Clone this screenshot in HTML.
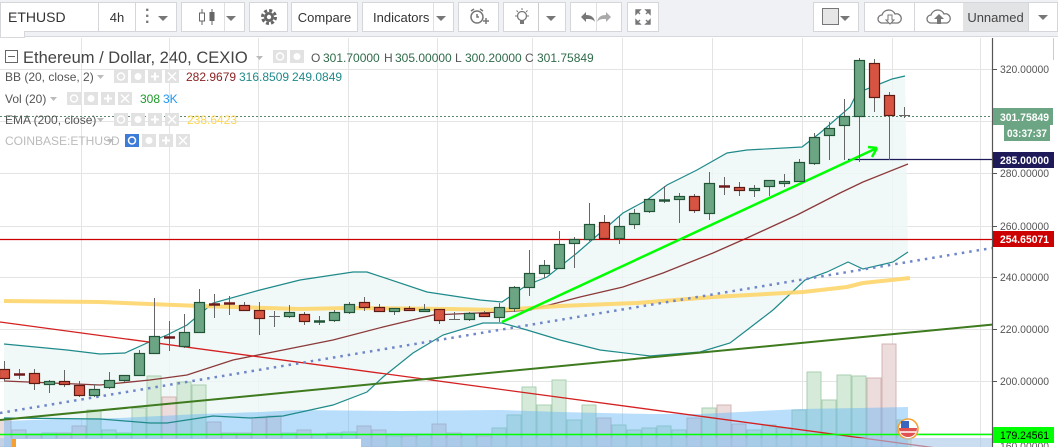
<!DOCTYPE html>
<html><head><meta charset="utf-8">
<style>
*{margin:0;padding:0;box-sizing:border-box}
body{width:1058px;height:447px;overflow:hidden;background:#fff;font-family:"Liberation Sans",sans-serif;position:relative}
#tb{position:absolute;left:0;top:0;width:1058px;height:37px;background:#eff1f4;border-bottom:1px solid #d6d8db}
.b{position:absolute;top:2px;height:30px;background:#fff;border:1px solid #d4d6d9;font-size:13px;color:#333;display:flex;align-items:center;justify-content:center}
.dd{width:0;height:0;border-left:5px solid transparent;border-right:5px solid transparent;border-top:5px solid #777}
.sep{position:absolute;top:0;bottom:0;width:1px;background:#e0e0e0}
svg text{font-family:"Liberation Sans",sans-serif}
</style></head><body>
<svg id="c" width="1058" height="447" style="position:absolute;left:0;top:0"></svg>
<div id="tb">
 <div class="b" style="left:0;width:99px;justify-content:flex-start;padding-left:7px;font-size:14px">ETHUSD</div>
 <div class="b" style="left:98px;width:38px">4h</div>
 <div class="b" style="left:135px;width:42px"><span style="position:absolute;left:9px;top:5px;font-size:16px;color:#777;font-weight:bold;line-height:6px">·<br>·<br>·</span><div class="dd" style="position:absolute;right:8px;top:13px"></div></div>
 <div class="b" style="left:181px;width:64px"><svg width="20" height="20" style="position:absolute;left:15px;top:4px"><path d="M5 2v16M15 2v16" stroke="#666"/><rect x="2.5" y="6" width="5" height="8" fill="#fff" stroke="#666"/><rect x="12.5" y="5" width="5" height="9" fill="#666"/></svg><div class="sep" style="left:42px"></div><div class="dd" style="position:absolute;right:8px;top:13px"></div></div>
 <div class="b" style="left:249px;width:39px"><svg width="20" height="20"><circle cx="10" cy="10" r="6.5" fill="none" stroke="#666" stroke-width="3" stroke-dasharray="3 2.1"/><circle cx="10" cy="10" r="5" fill="#666"/><circle cx="10" cy="10" r="2.2" fill="#fff"/></svg></div>
 <div class="b" style="left:291px;width:67px">Compare</div>
 <div class="b" style="left:362px;width:92px;justify-content:flex-start;padding-left:10px">Indicators<div class="sep" style="left:70px"></div><div class="dd" style="position:absolute;right:7px;top:13px"></div></div>
 <div class="b" style="left:458px;width:41px"><svg width="22" height="22"><circle cx="9" cy="11" r="6" fill="none" stroke="#777" stroke-width="1.5"/><path d="M3 5l3-2M15 5l-3-2M9 8v3h2M15 15h6M18 12v6" stroke="#777" stroke-width="1.5" fill="none"/></svg></div>
 <div class="b" style="left:503px;width:63px"><svg width="20" height="20" style="position:absolute;left:8px;top:4px"><circle cx="10" cy="9" r="4.5" fill="none" stroke="#777" stroke-width="1.3"/><rect x="8" y="13" width="4" height="4" fill="#777"/><path d="M10 1v2M3 9h2M15 9h2M4.5 3.5l1.5 1.5M15.5 3.5l-1.5 1.5" stroke="#777"/></svg><div class="sep" style="left:34px;background:#ccc"></div><div class="dd" style="position:absolute;right:9px;top:13px"></div></div>
 <div class="b" style="left:570px;width:52px"><svg width="50" height="20"><path d="M10 10l5-5v3c5 0 8 2 9 7-2-3-5-3-9-3v3z" fill="#777"/><path d="M40 10l-5-5v3c-5 0-8 2-9 7 2-3 5-3 9-3v3z" fill="#aaa"/></svg><div class="sep" style="left:25px"></div></div>
 <div class="b" style="left:627px;width:32px"><svg width="18" height="18"><path d="M2 2h4L2 6zM16 2h-4l4 4zM2 16h4l-4-4zM16 16h-4l4-4zM3 3l3 3M15 3l-3 3M3 15l3-3M15 15l-3-3" fill="#777" stroke="#777" stroke-width="1.4"/></svg></div>
 <div class="b" style="left:813px;width:46px"><div style="position:absolute;left:8px;top:5px;width:17px;height:17px;background:#e6e6e6;border:1px solid #777"></div><div class="dd" style="position:absolute;right:8px;top:13px"></div></div>
 <div class="b" style="left:864px;width:51px"><svg width="30" height="20"><path d="M7 16a4 4 0 010-8 7 7 0 0113-1 4.5 4.5 0 013 9z" fill="#fff" stroke="#777" stroke-width="1.3"/><path d="M13 8v5h-2l4 4 4-4h-2V8z" fill="#fff" stroke="#777"/></svg></div>
 <div class="b" style="left:914px;width:50px"><svg width="30" height="20"><path d="M7 16a4 4 0 010-8 7 7 0 0113-1 4.5 4.5 0 013 9z" fill="#fff" stroke="#777" stroke-width="1.3"/><path d="M13 17v-5h-3l5-5 5 5h-3v5z" fill="#777"/></svg></div>
 <div class="b" style="left:963px;width:66px;background:#e2e3e5;border-left:none;color:#444">Unnamed</div>
 <div class="b" style="left:1028px;width:30px"><div class="dd"></div></div>
</div>
<div style="position:absolute;left:0;top:31px;width:25px;height:7px;background:#fff;border:1px solid #d6d8db;border-top:none"></div>
<script>
var s='';
function L(x1,y1,x2,y2,c,w,extra){s+='<line x1="'+x1+'" y1="'+y1+'" x2="'+x2+'" y2="'+y2+'" stroke="'+c+'" stroke-width="'+(w||1)+'" '+(extra||'')+'/>';}
function P(pts,c,w,extra){s+='<polyline fill="none" points="'+pts.map(function(p){return p.join(',')}).join(' ')+'" stroke="'+c+'" stroke-width="'+w+'" '+(extra||'')+'/>';}
function T(x,y,t,c,sz,extra){s+='<text x="'+x+'" y="'+y+'" fill="'+c+'" font-size="'+sz+'" '+(extra||'')+'>'+t+'</text>';}
[17,69,121,173,226,277,329,381,433].forEach(function(y){L(0,y+.5,992,y+.5,'#e4e4e4')});
[81,169,258,348,437,532,622,712,802,892,980].forEach(function(x){L(x+.5,38,x+.5,447,'#e4e4e4')});
var up=[[4,344],[67,350],[100,354],[125,353],[147,343],[167,335],[187,325],[213,303],[260,290],[300,280],[353,272],[367,272],[427,292],[480,300],[502,302],[527,285],[547,277],[577,253],[623,213],[647,200],[667,185],[697,170],[727,153],[747,150],[802,147],[820,133],[850,107],[857,93],[892,79],[905,76]];
var lo=[[4,418],[100,419],[150,423],[167,423],[213,416],[250,418],[283,416],[333,405],[367,392],[383,377],[413,353],[443,335],[483,323],[502,323],[527,330],[560,340],[600,350],[650,356],[700,352],[730,343],[747,330],[773,310],[805,280],[827,272],[848,262],[863,269],[893,262],[908,252]];
var mid=[[4,381],[100,385],[150,380],[187,375],[233,360],[283,350],[333,340],[383,327],[433,315],[500,312],[530,310],[580,297],[623,287],[663,273],[713,253],[747,238],[797,215],[840,193],[863,182],[908,164]];
var poly=up.concat(lo.slice().reverse());
s+='<polygon points="'+poly.map(function(p){return p.join(',')}).join(' ')+'" fill="#eef6f6" opacity=".8"/>';
var vt=[['r',420],['r',430],['r',435],['g',433],['r',433],['r',426],['g',410],['g',430],['g',433],['g',408],['g',376],['r',397],['g',382],['g',385],['r',422],['r',433],['r',433],['r',418],['r',416],['g',433],['r',430],['g',435],['g',433],['g',432],['r',426],['r',430],['g',436],['r',436],['g',435],['r',424],['r',433],['g',435],['r',436],['g',428],['g',415],['g',387],['g',405],['g',380],['g',420],['g',405],['r',418],['g',425],['g',430],['g',428],['g',426],['g',430],['r',418],['g',408],['r',405],['r',424],['g',430],['g',425],['g',428],['g',410],['g',372],['g',400],['g',375],['g',376],['r',378],['r',344],['g',420]];
vt.forEach(function(v,i){var x=4+15*i-7;var g=v[0]=='g';s+='<rect x="'+x+'" y="'+v[1]+'" width="14" height="'+(447-v[1])+'" fill="'+(g?'#d5ead9':'#eddcdc')+'" stroke="'+(g?'#a9cfb1':'#d4b4b4')+'"/>';});
s+='<polygon points="4,421 60,419 120,418 200,414 260,412 300,410 400,411 500,410 560,412 650,414 700,414 760,411 800,409 860,408 908,407 908,447 4,447" fill="#64b5f6" opacity=".45"/>';
P(up,'#1f8a8a',1.2);P(lo,'#1f8a8a',1.2);P(mid,'#8b3a3a',1.3);
L(0,322,992,455.5,'#d42020',1.3);
P([[4,301],[100,302],[200,306],[300,309],[350,308],[450,309],[500,310],[560,306],[637,303],[713,297],[803,292],[847,287],[863,283],[910,278]],'#fdd56a',4,'stroke-linejoin="round" opacity=".9"');
L(0,413,992,248,'#6f86c9',2.5,'stroke-dasharray="2.5 5"');
L(0,420,992,324.6,'#3e7a1e',2);
L(0,239.5,992,239.5,'#cc0000',1.3);
L(848,159.5,992,159.5,'#1e1a5a',1.3);
L(0,116.5,992,116.5,'#5a8a6a',1,'stroke-dasharray="2 2"');
L(0,434.5,992,434.5,'#00ff00',1.5);
L(502,322,877,148,'#00ff00',2.5);L(877,148,868,147,'#00ff00',2.5);L(877,148,872,157,'#00ff00',2.5);
var C=[['r',369,378,361,381],['d',374,374,369,379],['r',373,383,369,390],['g',381,384,380,393],['r',381,384,370,387],['r',385,395,381,397],['g',389,395,384,397],['g',380,387,372,389],['g',375,380,375,382],['g',353,375,350,376],['g',336,353,298,353],['d',337,337,321,351],['g',332,346,314,348],['g',302,332,289,333],['d',304,304,294,318],['d',303,303,296,315],['r',305,310,302,311],['r',310,318,302,335],['x',316,316,311,327],['g',312,316,305,318],['r',314,321,312,325],['e',321,321,316,325],['g',312,320,310,322],['g',304,312,302,314],['r',302,307,297,311],['r',307,311,304,311],['g',308,311,308,315],['r',308,310,306,310],['g',309,311,304,311],['r',309,320,309,324],['x',319,319,312,319],['g',313,319,312,321],['r',313,316,311,316],['g',307,317,303,322],['g',287,308,286,312],['g',273,287,250,296],['g',265,273,260,278],['g',244,268,231,269],['g',239,243,237,268],['g',224,239,203,241],['r',222,238,215,238],['g',226,238,216,244],['g',213,224,209,229],['g',199,211,198,213],['e',200,200,186,203],['g',196,199,193,223],['r',196,210,194,213],['g',183,213,172,220],['d',186,186,177,195],['r',187,190,182,196],['g',188,190,185,197],['g',180,186,180,196],['g',181,183,174,187],['g',162,181,159,181],['g',137,163,133,165],['g',128,135,122,160],['g',116,125,99,160],['g',60,116,58,162],['r',63,97,59,112],['r',95,115,92,160],['x',115,115,107,118]];
C.forEach(function(c,i){var x=4+15*i;L(x+.5,c[3],x+.5,c[4],'#666',1);
 if(c[0]=='g'||c[0]=='r'){var g=c[0]=='g';s+='<rect x="'+(x-4.5)+'" y="'+(c[1]+.5)+'" width="10" height="'+Math.max(2,c[2]-c[1])+'" fill="'+(g?'#6ba583':'#d75442')+'" stroke="'+(g?'#225437':'#5b1a13')+'" stroke-width="1.2"/>';}
 else{var col=c[0]=='d'?'#6f1a1a':(c[0]=='e'?'#225437':'#666');L(x-5,c[1]+.5,x+6,c[1]+.5,col,c[0]=='x'?1:2.5);}});
s+='<circle cx="908" cy="429" r="10" fill="#fff" stroke="#f5a030" stroke-width="1.5"/><path d="M899 428h18a9 9 0 01-18 0z" fill="#e05050"/><path d="M900 432h16" stroke="#fff" stroke-width="1.5"/><rect x="901" y="421" width="8" height="7" fill="#3a66c0"/>';
s+='<rect x="0" y="438" width="992" height="9" fill="#a8c8e8" opacity=".6"/><rect x="12" y="439" width="349" height="8" fill="#fff"/><rect x="12" y="439" width="4" height="8" fill="#f5a030"/>';
s+='<rect x="993" y="38" width="65" height="409" fill="#fff"/>';
L(992.5,38,992.5,447,'#555',1.2);
var TL='textLength="49" lengthAdjust="spacingAndGlyphs"';
[[69,'320.00000'],[173,'280.00000'],[226,'260.00000'],[277,'240.00000'],[329,'220.00000'],[381,'200.00000']].forEach(function(a){L(993,a[0]+.5,997,a[0]+.5,'#555');T(1000,a[0]+4,a[1],'#555',11,TL);});
T(1000,450,'160.00000','#555',11,TL);
s+='<rect x="993" y="108" width="60" height="17" fill="#6ba583"/>';T(1000,121,'301.75849','#fff',11,'font-weight="bold" '+TL);
s+='<rect x="1004" y="125" width="46" height="16" fill="#6ba583"/>';T(1007,137,'03:37:37','#fff',11,'font-weight="bold" textLength="40" lengthAdjust="spacingAndGlyphs"');
s+='<rect x="993" y="152" width="61" height="16" fill="#1e1a5a"/>';T(1000,164,'285.00000','#fff',11,'font-weight="bold" '+TL);
s+='<rect x="993" y="231" width="61" height="16" fill="#cc0000"/>';T(1000,243,'254.65071','#fff',11,'font-weight="bold" '+TL);
s+='<rect x="993" y="427" width="61" height="16" fill="#00ff00"/>';T(1000,439,'179.24561','#000',11,TL);
L(1053.5,38,1053.5,60,'#ccc');
function icons(x,y,n,first){for(var k=0;k<n;k++){s+='<rect x="'+(x+k*17)+'" y="'+y+'" width="14" height="13" fill="'+(k==0&&first?'#3d7bd8':'#e2e2e2')+'"/>';var cx=x+k*17+7,cy=y+6.5;
 if(k==0)s+='<circle cx="'+cx+'" cy="'+cy+'" r="3.5" fill="none" stroke="#fff" stroke-width="1.5"/>';
 else if(k==1)s+='<circle cx="'+cx+'" cy="'+cy+'" r="3.5" fill="#fff"/>';
 else if(k==2)s+='<path d="M'+(cx-4)+' '+cy+'h8M'+cx+' '+(cy-4)+'v8" stroke="#fff" stroke-width="2"/>';
 else s+='<path d="M'+(cx-4)+' '+(cy-4)+'l8 8M'+(cx+4)+' '+(cy-4)+'l-8 8" stroke="#fff" stroke-width="1.5"/>';}}
s+='<rect x="5.5" y="50.5" width="12" height="12" fill="none" stroke="#666"/>';L(8,56.5,15,56.5,'#666');
T(23,63,'Ethereum / Dollar, 240, CEXIO','#444',16.5);
s+='<path d="M256 56h7l-3.5 4z" fill="#bbb"/>';icons(273,50,2);
T(311,62,'O','#555',12);T(323,62,'301.70000','#2f6b4a',12);T(384,62,'H','#555',12);T(395,62,'305.00000','#2f6b4a',12);T(455,62,'L','#555',12);T(465,62,'300.20000','#2f6b4a',12);T(525,62,'C','#555',12);T(537,62,'301.75849','#2f6b4a',12);
T(5,81,'BB (20, close, 2)','#555',12);s+='<path d="M97 75h7l-3.5 4z" fill="#bbb"/>';icons(114,70,4);
T(186,81,'282.9679','#8b2222',12);T(239,81,'316.8509','#1f8a8a',12);T(292,81,'249.0849','#1f8a8a',12);
T(5,103,'Vol (20)','#555',12);s+='<path d="M50 97h7l-3.5 4z" fill="#bbb"/>';icons(67,92,4);
T(140,103,'308','#1e9a2a',12);T(163,103,'3K','#2196f3',12);
T(5,124,'EMA (200, close)','#555',12);s+='<path d="M97 118h7l-3.5 4z" fill="#bbb"/>';icons(114,113,4);
T(187,124,'238.6423','#ffd54f',12);
T(5,145,'COINBASE:ETHUSD','#bbb',12);s+='<path d="M107 139h7l-3.5 4z" fill="#bbb"/>';icons(125,134,4,true);
document.getElementById('c').innerHTML=s;
</script>
</body></html>
